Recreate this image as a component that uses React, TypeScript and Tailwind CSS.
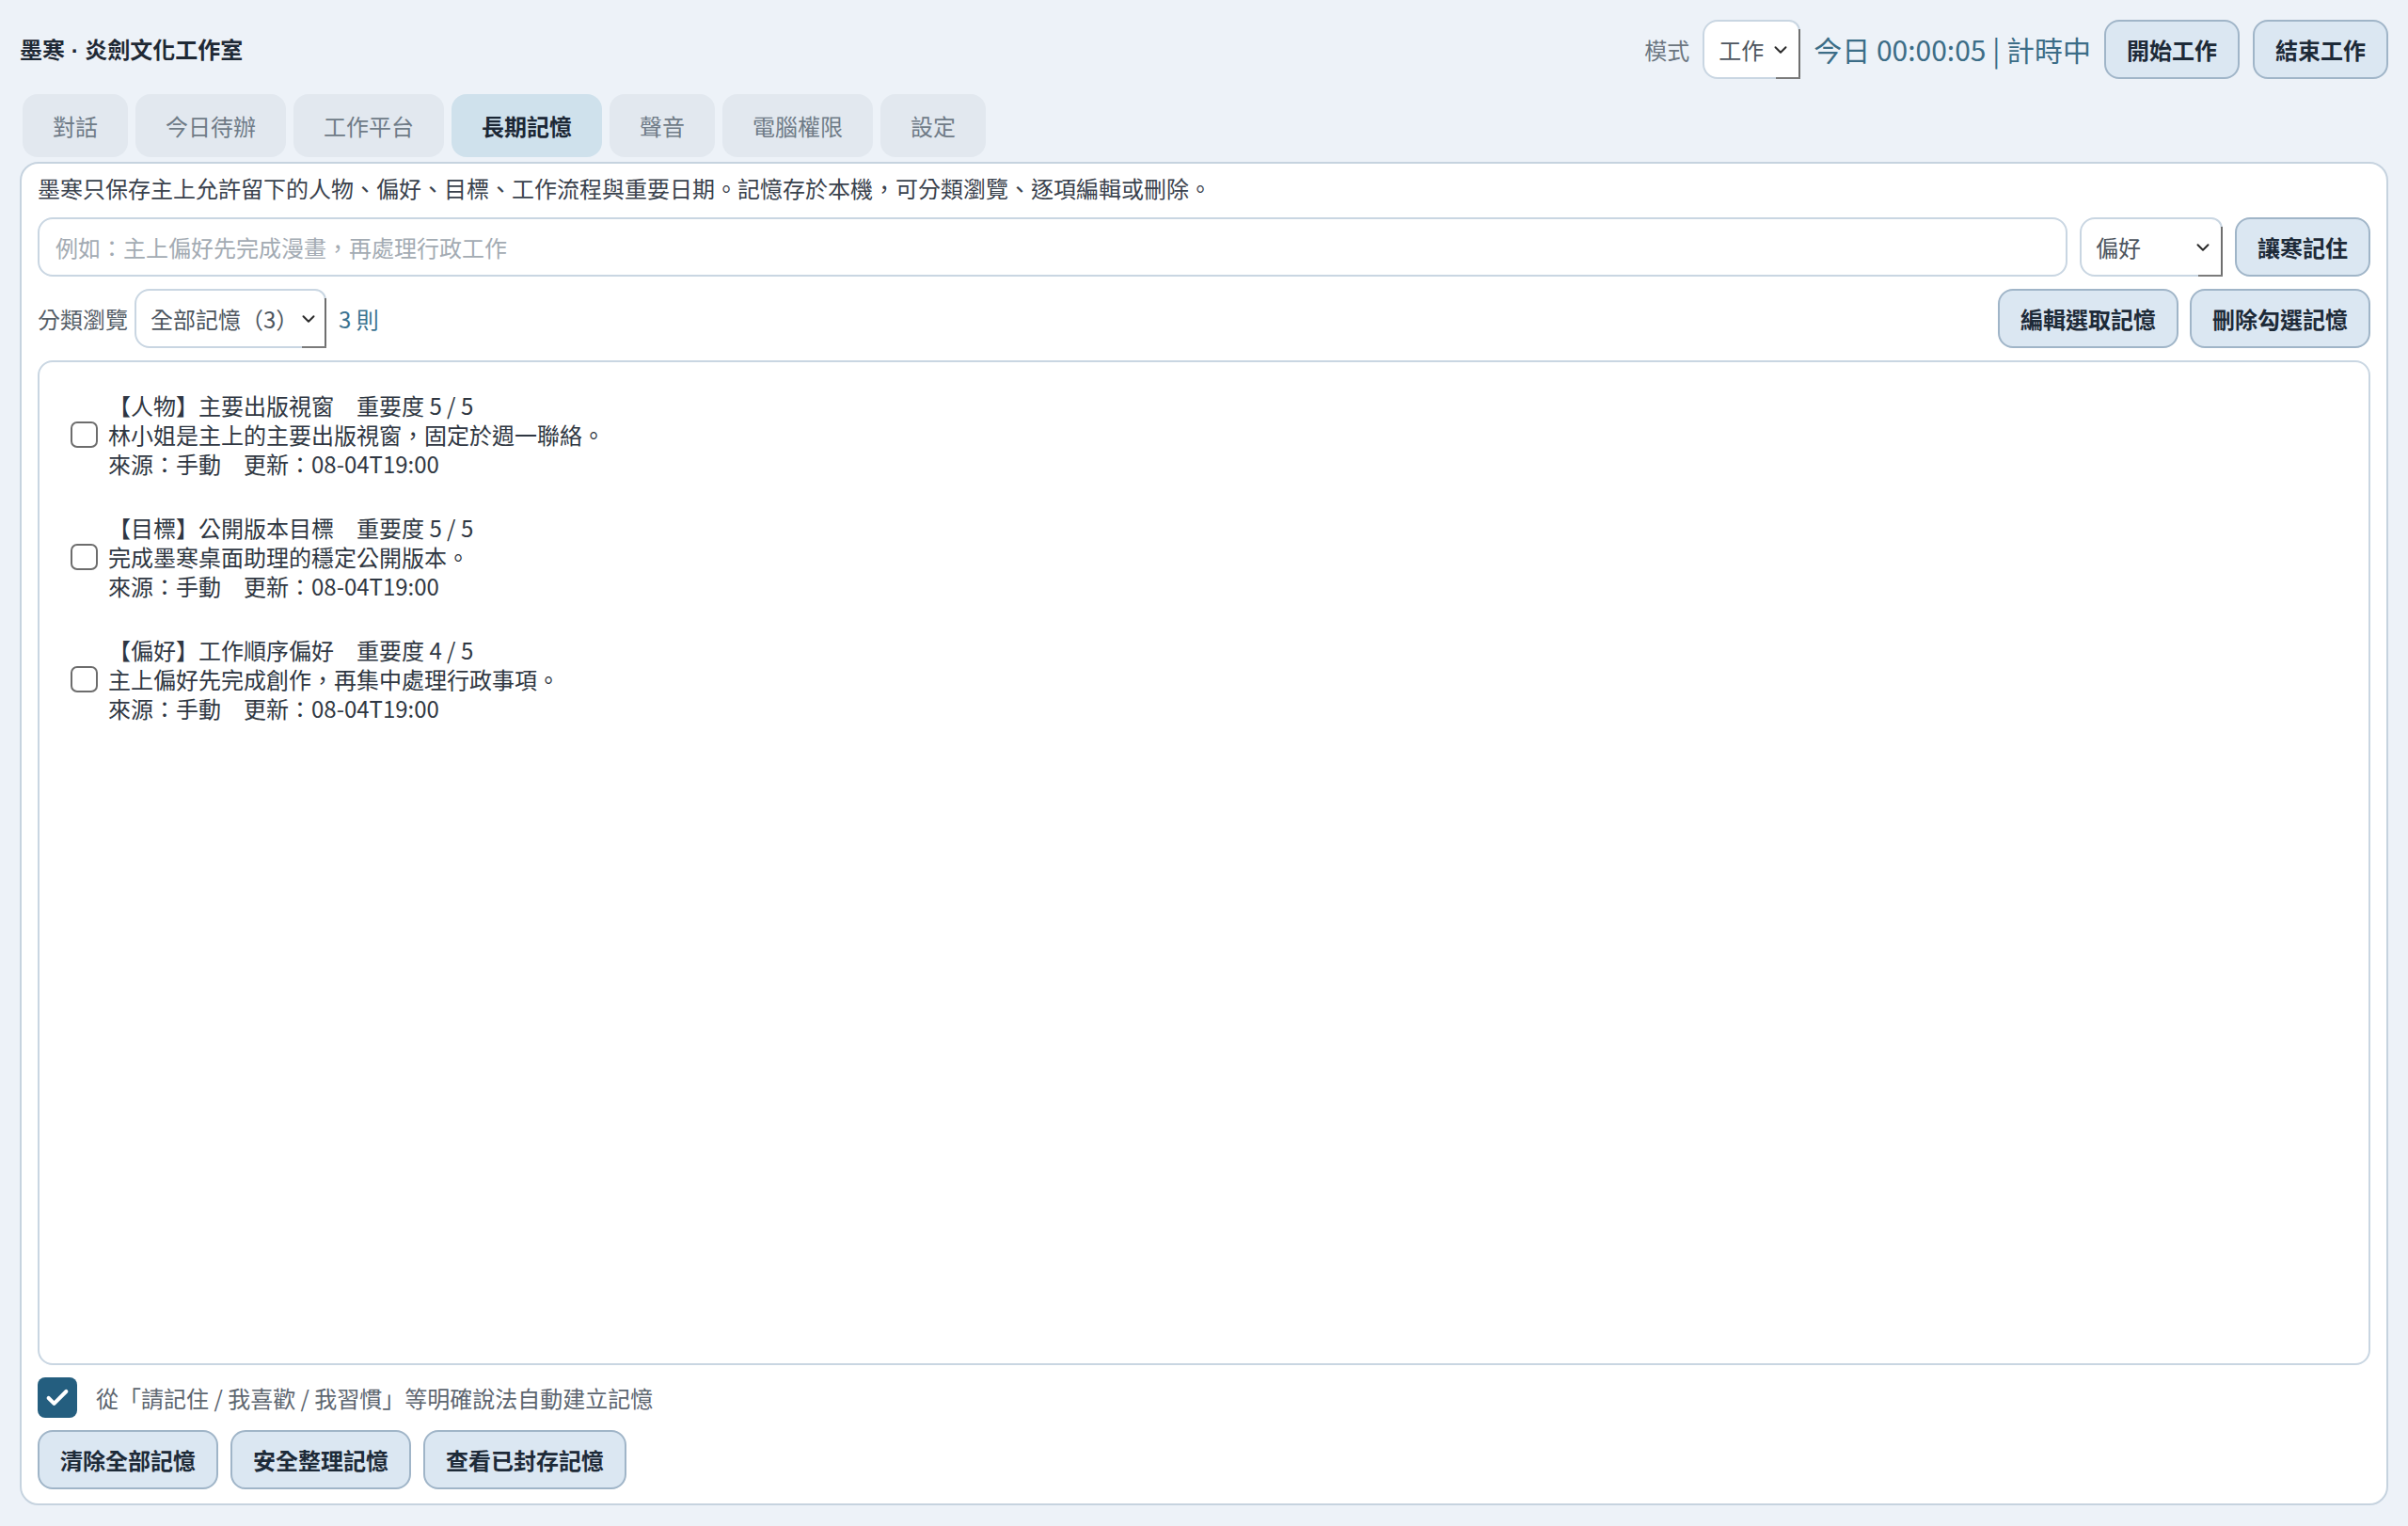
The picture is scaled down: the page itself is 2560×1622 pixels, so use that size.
import { Check, ChevronDown } from "lucide-react";

const tabs = ["對話", "今日待辦", "工作平台", "長期記憶", "聲音", "電腦權限", "設定"];

const memories = [
  {
    tag: "人物",
    title: "主要出版視窗",
    level: 5,
    body: "林小姐是主上的主要出版視窗，固定於週一聯絡。",
  },
  {
    tag: "目標",
    title: "公開版本目標",
    level: 5,
    body: "完成墨寒桌面助理的穩定公開版本。",
  },
  {
    tag: "偏好",
    title: "工作順序偏好",
    level: 4,
    body: "主上偏好先完成創作，再集中處理行政事項。",
  },
];

function Button({ children }: { children: React.ReactNode }) {
  return (
    <button className="flex h-[63px] shrink-0 items-center justify-center rounded-2xl border-2 border-[#a0b5c8] bg-[#dbe7f2] px-[22px] font-bold text-[#1d2a38]">
      {children}
    </button>
  );
}

// native-looking select box: rounded on the left, hard grey edge on the right
function SelectBox({ value, width }: { value: string; width: string }) {
  return (
    <div
      className={`relative flex h-[63px] shrink-0 items-center justify-between rounded-l-2xl rounded-tr-xl border-2 border-[#c9d6e2] bg-white pr-[8px] pl-[15px] text-[#4d555e] ${width}`}
    >
      <span className="whitespace-nowrap">{value}</span>
      <ChevronDown className="h-[22px] w-[22px] shrink-0 text-[#2b2b2b]" strokeWidth={2.2} />
      <span className="absolute top-[8px] right-[-2px] bottom-[-2px] w-[2px] bg-[#6f6f6f]" />
      <span className="absolute right-[-2px] bottom-[-2px] h-[2px] w-[26px] bg-[#7b7b7b]" />
    </div>
  );
}

export default function App() {
  return (
    <div
      lang="zh-Hant-TW"
      className="flex h-screen flex-col bg-[#edf2f8] px-[21px] pt-[21px] pb-[22px] font-['Noto_Sans_CJK_TC','Noto_Sans',sans-serif] text-[24px] leading-[31px] text-[#2f3742]"
    >
      <header className="flex items-center justify-between">
        <h1 className="text-[24px] font-bold text-[#1f2935]">
          墨寒<span className="font-['Liberation_Sans',sans-serif]"> · </span>炎劍文化工作室
        </h1>
        <div className="flex items-center gap-[14px]">
          <span className="text-[#6b7580]">模式</span>
          <SelectBox value="工作" width="w-[104px]" />
          <span className="text-[30px] text-[#3c6d87]">今日 00:00:05 | 計時中</span>
          <Button>開始工作</Button>
          <Button>結束工作</Button>
        </div>
      </header>

      <nav className="mt-[16px] ml-[3px] flex gap-2">
        {tabs.map((tab) =>
          tab === "長期記憶" ? (
            <div
              key={tab}
              className="flex h-[67px] items-center rounded-2xl bg-[#cfe1ec] px-8 font-bold text-[#1b2735]"
            >
              {tab}
            </div>
          ) : (
            <div
              key={tab}
              className="flex h-[67px] items-center rounded-2xl bg-[#e2e8ef] px-8 text-[#6f7b87]"
            >
              {tab}
            </div>
          ),
        )}
      </nav>

      <main className="mt-[5px] flex flex-1 flex-col gap-[13px] rounded-[20px] border-2 border-[#c6d3df] bg-white px-[17px] pt-[10px] pb-[15px]">
        <p className="mb-[3px] text-[#3a424d]">
          墨寒只保存主上允許留下的人物、偏好、目標、工作流程與重要日期。記憶存於本機，可分類瀏覽、逐項編輯或刪除。
        </p>

        <div className="flex items-center gap-[13px]">
          <div className="flex h-[63px] flex-1 items-center rounded-2xl border-2 border-[#c9d6e2] bg-white px-[17px] text-[#a3abb3]">
            例如：主上偏好先完成漫畫，再處理行政工作
          </div>
          <SelectBox value="偏好" width="w-[152px]" />
          <Button>讓寒記住</Button>
        </div>

        <div className="flex items-center gap-[13px]">
          <span className="text-[#555e68]">分類瀏覽</span>
          <div className="-ml-[6px]">
            <SelectBox value="全部記憶（3）" width="w-[204px]" />
          </div>
          <span className="text-[#3a7290]">3 則</span>
          <div className="ml-auto flex gap-[12px]">
            <Button>編輯選取記憶</Button>
            <Button>刪除勾選記憶</Button>
          </div>
        </div>

        <section className="flex flex-1 flex-col gap-[37px] rounded-2xl border-2 border-[#c9d6e2] pt-[30px] pl-[33px]">
          {memories.map((m) => (
            <div key={m.title} className="flex items-center gap-[11px]">
              <span className="h-[28px] w-[29px] shrink-0 rounded-[7px] border-2 border-[#6d6d6d] bg-white" />
              <div className="flex flex-col">
                <span>
                  【{m.tag}】{m.title}　重要度 {m.level} / 5
                </span>
                <span>{m.body}</span>
                <span>來源：手動　更新：08-04T19:00</span>
              </div>
            </div>
          ))}
        </section>

        <label className="flex items-center gap-[20px]">
          <span className="flex h-[43px] w-[42px] items-center justify-center rounded-[8px] bg-[#245e7f]">
            <Check className="h-[28px] w-[28px] text-white" strokeWidth={3.5} />
          </span>
          <span className="text-[#5d6670]">從「請記住 / 我喜歡 / 我習慣」等明確說法自動建立記憶</span>
        </label>

        <div className="flex gap-[13px]">
          <Button>清除全部記憶</Button>
          <Button>安全整理記憶</Button>
          <Button>查看已封存記憶</Button>
        </div>
      </main>
    </div>
  );
}
